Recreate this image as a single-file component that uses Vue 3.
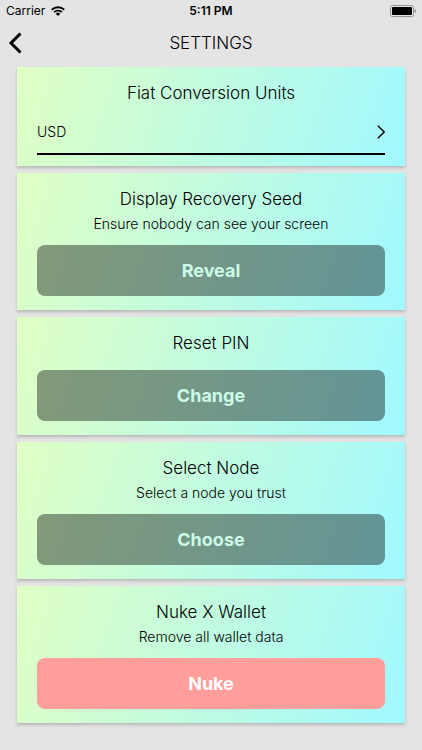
<template>
  <div class="screen">
    <div class="status-bar">
      <div class="status-left">
        <span>Carrier</span>
        <svg class="wifi" viewBox="0 0 28 20" aria-hidden="true">
          <path d="M1.5 7.5a18 18 0 0 1 25 0" />
          <path d="M6.2 12.2a11.4 11.4 0 0 1 15.6 0" />
          <path class="dot" d="M14 20l-4.5-4.7a6.4 6.4 0 0 1 9 0z" />
        </svg>
      </div>
      <div class="status-time">5:11 PM</div>
      <div class="status-right">
        <svg class="battery" viewBox="0 0 27 12" aria-hidden="true">
          <rect class="shell" x="1.500" y=".5" width="23" height="11" rx="2" />
          <rect x="3" y="2" width="20" height="8" rx="1" />
          <path class="cap" d="M25.500 4c2 .6 2 3.400 0 4z" />
        </svg>
      </div>
    </div>

    <header class="header">
      <button class="back" type="button" aria-label="Back">
        <svg viewBox="0 0 14 22" aria-hidden="true">
          <path d="M12.500 1.500L3 11l9.500 9.500" />
        </svg>
      </button>
      <h1>SETTINGS</h1>
    </header>

    <main class="cards">
      <section class="card card-units">
        <h2>Fiat Conversion Units</h2>
        <button class="picker" type="button">
          <span>{{ currency }}</span>
          <svg viewBox="0 0 8 14" aria-hidden="true">
            <path d="M.8.800L7.200 7 .8 13.200" />
          </svg>
        </button>
      </section>

      <section v-for="item in items" :key="item.title" class="card">
        <h2>{{ item.title }}</h2>
        <p v-if="item.text">{{ item.text }}</p>
        <button class="action" :class="{ danger: item.danger }" type="button">
          {{ item.action }}
        </button>
      </section>
    </main>
  </div>
</template>

<script setup>
import { ref } from 'vue';

const currency = ref('USD');

const items = [
  { title: 'Display Recovery Seed', text: 'Ensure nobody can see your screen', action: 'Reveal' },
  { title: 'Reset PIN', text: '', action: 'Change' },
  { title: 'Select Node', text: 'Select a node you trust', action: 'Choose' },
  { title: 'Nuke X Wallet', text: 'Remove all wallet data', action: 'Nuke', danger: true },
];
</script>

<style>
body {
  margin: 0;
  background: #e4e4e4;
}
</style>

<style scoped>
* {
  box-sizing: border-box;
}

.screen {
  min-height: 100vh;
  background: #e4e4e4;
  color: #000;
  font-family: Inter, "Liberation Sans", sans-serif;
}

h1,
h2,
p {
  margin: 0;
}

button {
  border: 0;
  padding: 0;
  font-family: inherit;
  color: inherit;
  background: none;
  cursor: pointer;
}

svg {
  display: block;
  fill: none;
}

.status-bar {
  display: grid;
  grid-template-columns: 1fr auto 1fr;
  align-items: center;
  height: 21px;
  padding: 0 6px;
  font-size: 12px;
}

.status-left {
  display: flex;
  align-items: center;
  gap: 6px;
}

.status-time {
  font-weight: 600;
}

.status-right {
  display: flex;
  justify-content: flex-end;
}

.wifi {
  width: 14px;
  height: 10px;
  stroke: #000;
  stroke-width: 3.6;
}

.wifi .dot {
  fill: #000;
  stroke: none;
}

.battery {
  width: 27px;
  height: 12px;
  fill: #000;
}

.battery .shell {
  fill: none;
  stroke: #929292;
}

.battery .cap {
  fill: #929292;
}

.header {
  display: grid;
  grid-template-columns: 40px 1fr 40px;
  align-items: center;
  height: 44px;
}

.header h1 {
  font-size: 17px;
  line-height: 24px;
  font-weight: 300;
  text-align: center;
}

.back {
  display: flex;
  align-items: center;
  height: 44px;
  padding-left: 8px;
}

.back svg {
  width: 14px;
  height: 22px;
  stroke: #000;
  stroke-width: 3;
}

.cards {
  display: flex;
  flex-direction: column;
  gap: 7px;
  padding: 2px 17px 24px;
}

.card {
  padding: 14px 20px;
  background: linear-gradient(108deg, #e0ffc4, #a0f8ff);
  box-shadow: 0 2px 3px rgba(0, 0, 0, 0.2);
  text-align: center;
}

.card h2 {
  font-size: 17px;
  line-height: 24px;
  font-weight: 300;
}

.card p {
  margin-top: 3px;
  font-size: 14px;
  line-height: 20px;
  font-weight: 300;
}

.card-units {
  padding-bottom: 11px;
}

.picker {
  display: flex;
  align-items: center;
  justify-content: space-between;
  width: 100%;
  height: 45px;
  margin-top: 5px;
  border-bottom: 2px solid #000;
  font-size: 14px;
  font-weight: 300;
}

.picker svg {
  width: 8px;
  height: 14px;
  stroke: #000;
  stroke-width: 1.4;
}

.action {
  display: block;
  width: 100%;
  height: 51px;
  margin-top: 11px;
  border-radius: 8px;
  background: rgba(0, 0, 0, 0.4);
  color: #cdfbe8;
  font-size: 18px;
  font-weight: 700;
}

.card h2 + .action {
  margin-top: 15px;
}

.action.danger {
  background: #ff9e9a;
  color: #fff;
}
</style>
